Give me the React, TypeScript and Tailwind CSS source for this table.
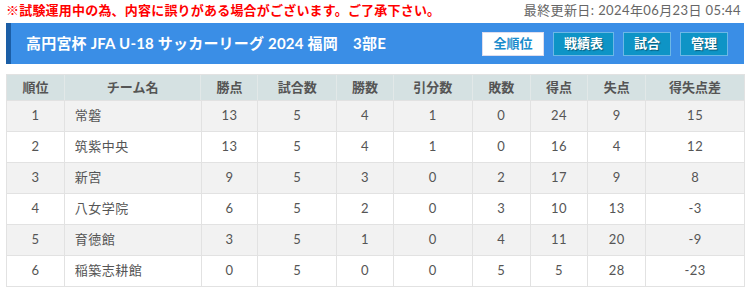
import React from "react";

const cols = [
  { label: "順位", w: "w-[57px]" },
  { label: "チーム名", w: "w-[137px]" },
  { label: "勝点", w: "w-[57px]" },
  { label: "試合数", w: "w-[79px]" },
  { label: "勝数", w: "w-[57px]" },
  { label: "引分数", w: "w-[79px]" },
  { label: "敗数", w: "w-[58px]" },
  { label: "得点", w: "w-[58px]" },
  { label: "失点", w: "w-[58px]" },
  { label: "得失点差", w: "w-[99px]" },
];

const rows: (string | number)[][] = [
  [1, "常磐", 13, 5, 4, 1, 0, 24, 9, 15],
  [2, "筑紫中央", 13, 5, 4, 1, 0, 16, 4, 12],
  [3, "新宮", 9, 5, 3, 0, 2, 17, 9, 8],
  [4, "八女学院", 6, 5, 2, 0, 3, 10, 13, -3],
  [5, "育徳館", 3, 5, 1, 0, 4, 11, 20, -9],
  [6, "稲築志耕館", 0, 5, 0, 0, 5, 5, 28, -23],
];

export default function App() {
  return (
    <div
      className="w-[750px] h-[289px] bg-white overflow-hidden"
      style={{ fontFamily: "Lato, 'Noto Sans CJK JP', sans-serif" }}
    >
      <div className="flex justify-between items-center h-[22px] pl-[6px] pr-[9px]">
        <span className="text-[13px] font-bold text-[#ff0000] tracking-[0.2px]">
          ※試験運用中の為、内容に誤りがある場合がございます。ご了承下さい。
        </span>
        <span className="text-[13px] text-[#666] tracking-[0.4px]">
          最終更新日: 2024年06月23日 05:44
        </span>
      </div>
      <div className="mx-[6px] mt-[1px] h-[41px] bg-[#3a8ee6] border-l-[5px] border-[#1b5ea6] flex items-center justify-between pl-[15px] pr-[16px]">
        <span className="text-[15px] font-bold text-white tracking-[0.2px]">
          高円宮杯 JFA U-18 サッカーリーグ 2024 福岡　3部E
        </span>
        <div className="flex gap-[9px]">
          <span className="h-[24px] w-[62px] flex items-center justify-center bg-white border border-[#dde] text-[#1a8ccc] text-[13px] font-bold">
            全順位
          </span>
          <span className="h-[24px] w-[61px] flex items-center justify-center bg-[#0e94c6] border border-[#6cb8e6] text-white text-[13px] font-bold [text-shadow:1px_1px_1px_rgba(0,0,0,0.4)]">
            戦績表
          </span>
          <span className="h-[24px] w-[48px] flex items-center justify-center bg-[#0e94c6] border border-[#6cb8e6] text-white text-[13px] font-bold [text-shadow:1px_1px_1px_rgba(0,0,0,0.4)]">
            試合
          </span>
          <span className="h-[24px] w-[48px] flex items-center justify-center bg-[#0e94c6] border border-[#6cb8e6] text-white text-[13px] font-bold [text-shadow:1px_1px_1px_rgba(0,0,0,0.4)]">
            管理
          </span>
        </div>
      </div>
      <div className="mx-[6px] mt-[10px] w-[739px] border border-[#e2e2e2] text-[13px] text-[#555]">
        <div className="flex h-[25px] bg-[#d5e1e2] font-bold">
          {cols.map((c, i) => (
            <div
              key={i}
              className={`${c.w} flex items-center justify-center ${i > 0 ? "border-l border-[#e2e8e8]" : ""}`}
            >
              {c.label}
            </div>
          ))}
        </div>
        {rows.map((r, ri) => (
          <div
            key={ri}
            className={`flex h-[31px] border-t border-[#e2e2e2] ${ri % 2 === 0 ? "bg-[#f2f2f2]" : "bg-white"}`}
          >
            {r.map((v, ci) => (
              <div
                key={ci}
                className={`${cols[ci].w} flex items-center tracking-[0.5px] ${ci === 1 ? "justify-start pl-[10px]" : "justify-center"} ${ci > 0 ? "border-l border-[#e2e2e2]" : ""}`}
              >
                {v}
              </div>
            ))}
          </div>
        ))}
      </div>
    </div>
  );
}
